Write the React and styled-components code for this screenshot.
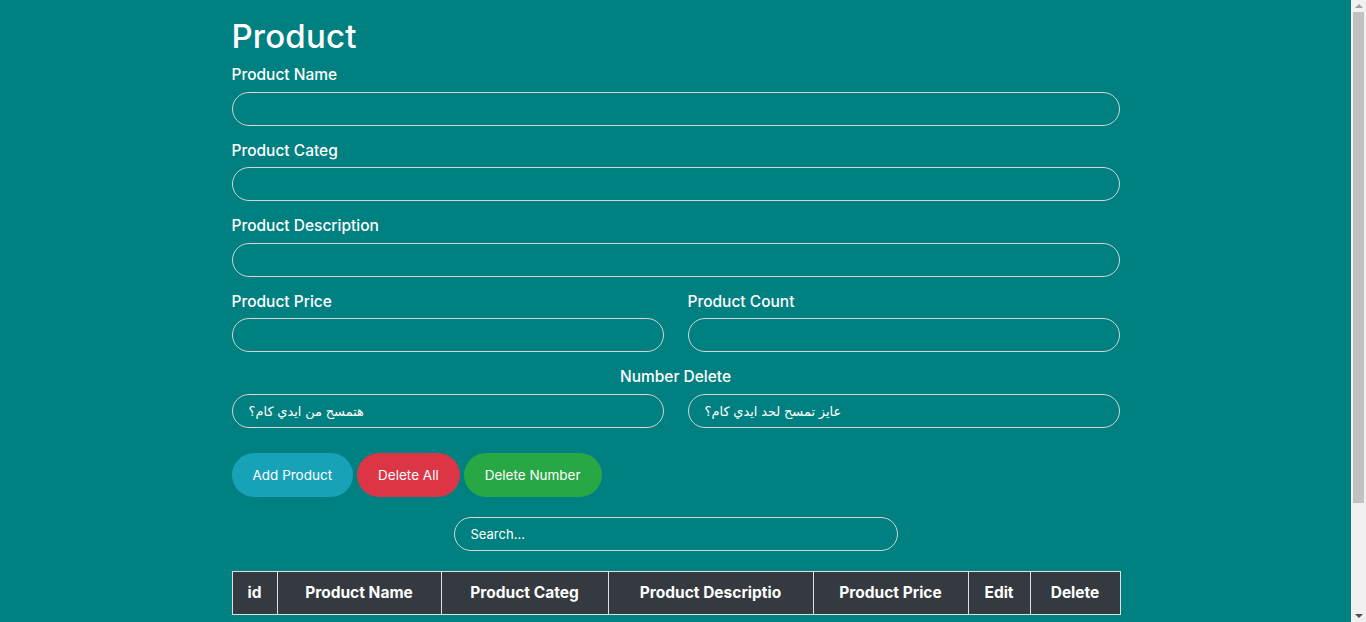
import React from "react";
import styled, { createGlobalStyle } from "styled-components";

const GlobalStyle = createGlobalStyle`
  html, body {
    margin: 0;
    padding: 0;
    background-color: #008080;
  }
  body {
    font-family: "Inter", "DejaVu Sans", sans-serif;
    color: #fff;
    padding-right: 15px;
  }
`;

const Page = styled.div`
  width: 888px;
  margin: 0 auto;
  padding: 14px 0 60px;
`;

const Title = styled.h1`
  font-size: 33px;
  font-weight: 500;
  line-height: 44px;
  margin: 0 0 2px;
  letter-spacing: 0.2px;
`;

const Field = styled.div`
  display: flex;
  flex-direction: column;
  margin-bottom: 10px;
`;

const Label = styled.label`
  font-size: 15.5px;
  font-weight: 500;
  line-height: 24px;
  padding-top: 3px;
  margin-bottom: 4.5px;
  text-align: ${(p) => (p.$center ? "center" : "left")};
`;

const Input = styled.input`
  box-sizing: border-box;
  width: 100%;
  height: 34px;
  border: 1px solid #d4d4d4;
  border-radius: 17px;
  background: transparent;
  color: #fff;
  padding: 0 16px;
  font-family: "Inter", "DejaVu Sans", sans-serif;
  font-size: 13px;
  outline: none;

  &::placeholder {
    color: #fff;
    opacity: 1;
  }
`;

const TwoCols = styled.div`
  display: grid;
  grid-template-columns: 1fr 1fr;
  column-gap: 24px;
`;

const Buttons = styled.div`
  display: flex;
  gap: 4px;
  margin-top: 25px;
`;

const Button = styled.button`
  height: 44px;
  padding: 0 21px;
  border: none;
  border-radius: 22px;
  background-color: ${(p) => p.$bg};
  color: #fff;
  font-family: "Inter", "DejaVu Sans", sans-serif;
  font-size: 13.5px;
  cursor: pointer;
`;

const SearchWrap = styled.div`
  width: 444px;
  margin: 20px auto 20px;
`;

const Table = styled.table`
  width: 100%;
  border-collapse: collapse;
  table-layout: fixed;
`;

const Th = styled.th`
  box-sizing: border-box;
  width: ${(p) => p.$w}px;
  background-color: #343a40;
  color: #fff;
  border: 1px solid #dee2e6;
  padding: 11px 4px;
  font-size: 15.5px;
  font-weight: 700;
  line-height: 20px;
  text-align: center;
  white-space: nowrap;
  overflow: hidden;
`;

/* stand-in for the browser's vertical scrollbar seen in the screenshot */
const ScrollTrack = styled.div`
  position: fixed;
  top: 0;
  right: 0;
  bottom: 0;
  width: 15px;
  background-color: #f1f1f1;
  display: flex;
  flex-direction: column;
  align-items: center;
`;

const Arrow = styled.div`
  height: 12px;
  width: 100%;
  display: flex;
  align-items: center;
  justify-content: center;

  &::before {
    content: "";
    border-left: 4px solid transparent;
    border-right: 4px solid transparent;
    ${(p) =>
      p.$down
        ? `border-top: 4px solid #505050;`
        : `border-bottom: 4px solid #a3a3a3;`}
  }
`;

const Thumb = styled.div`
  width: 11px;
  height: 491px;
  background-color: #c1c1c1;
`;

const Spacer = styled.div`
  flex: 1;
`;

const columns = [
  ["id", 45],
  ["Product Name", 164],
  ["Product Categ", 167],
  ["Product Descriptio", 205],
  ["Product Price", 155],
  ["Edit", 62],
  ["Delete", 90],
];

export default function App() {
  return (
    <>
      <GlobalStyle />
      <Page>
        <Title>Product</Title>
        <Field>
          <Label>Product Name</Label>
          <Input type="text" />
        </Field>
        <Field>
          <Label>Product Categ</Label>
          <Input type="text" />
        </Field>
        <Field>
          <Label>Product Description</Label>
          <Input type="text" />
        </Field>
        <TwoCols>
          <Field>
            <Label>Product Price</Label>
            <Input type="number" />
          </Field>
          <Field>
            <Label>Product Count</Label>
            <Input type="number" />
          </Field>
        </TwoCols>
        <Label as="div" $center>
          Number Delete
        </Label>
        <TwoCols>
          <Input type="number" placeholder="هتمسح من ايدي كام؟" />
          <Input type="number" placeholder="عايز تمسح لحد ايدي كام؟" />
        </TwoCols>
        <Buttons>
          <Button $bg="#17a2b8">Add Product</Button>
          <Button $bg="#dc3545">Delete All</Button>
          <Button $bg="#28a745">Delete Number</Button>
        </Buttons>
        <SearchWrap>
          <Input type="text" placeholder="Search..." />
        </SearchWrap>
        <Table>
          <thead>
            <tr>
              {columns.map(([name, w]) => (
                <Th key={name} $w={w}>
                  {name}
                </Th>
              ))}
            </tr>
          </thead>
          <tbody></tbody>
        </Table>
      </Page>
      <ScrollTrack>
        <Arrow />
        <Thumb />
        <Spacer />
        <Arrow $down />
      </ScrollTrack>
    </>
  );
}
